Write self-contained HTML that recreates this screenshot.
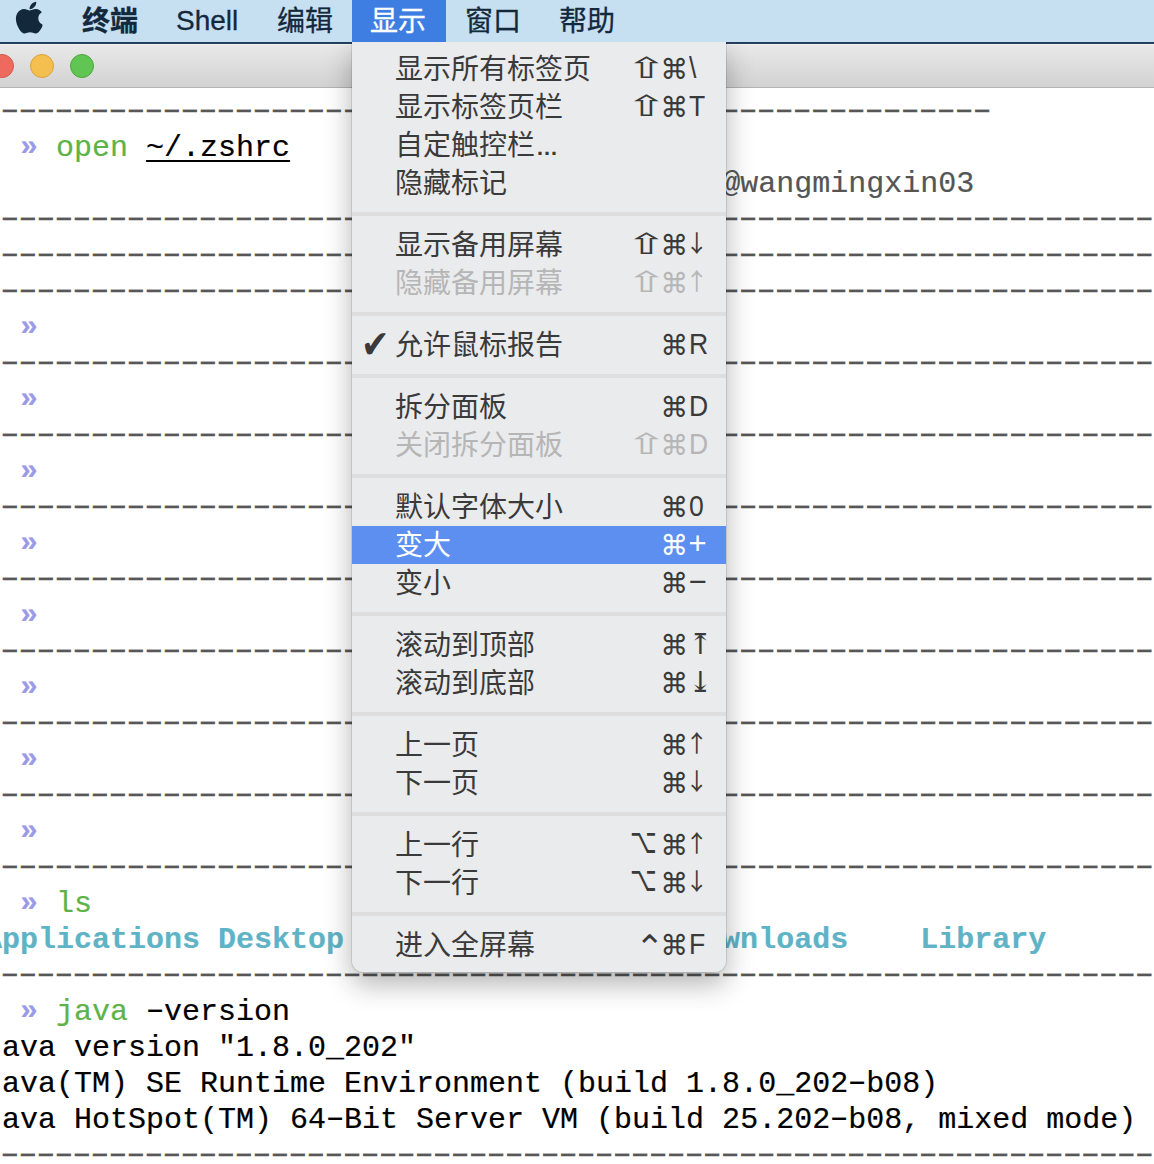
<!DOCTYPE html>
<html lang="zh-CN">
<head>
<meta charset="utf-8">
<title>终端</title>
<style>
html,body{margin:0;padding:0;}
body{width:1154px;height:1164px;overflow:hidden;position:relative;background:#fff;
 font-family:"Liberation Sans","Noto Sans CJK SC",sans-serif;}
#bar{position:absolute;left:0;top:0;width:1154px;height:42px;background:#c6e0f2;z-index:3;}
#barline{position:absolute;left:0;top:42px;width:1154px;height:2px;background:#223f5c;z-index:1;}
#bar .mi{-webkit-text-stroke:0.3px;position:absolute;top:2px;height:42px;line-height:40px;font-size:28px;color:#14283c;white-space:nowrap;}
#bar .on{color:#fff;left:370px;}
#bar .hl{position:absolute;left:352px;top:0;width:94px;height:42px;background:#3e7de2;}
#apple{position:absolute;left:12.7px;top:1.3px;}
#tb{position:absolute;left:0;top:44px;width:1154px;height:43px;background:linear-gradient(#e9e9e9,#d2d2d2);border-bottom:1px solid #b3b3b3;box-shadow:inset 0 1px 0 #f3f3f3;}
.tl{position:absolute;top:10px;width:22px;height:22px;border-radius:50%;border:1px solid;}
#term{position:absolute;left:-16px;top:94px;width:1300px;font-family:"Liberation Mono",monospace;font-size:30px;line-height:36px;color:#000;-webkit-text-stroke:0.2px;}
#term .r{height:36px;white-space:pre;}
#term .d{color:#575757;-webkit-text-stroke:0.4px #575757;display:inline-block;letter-spacing:-7.09px;transform:scaleX(1.65);transform-origin:0 50%;position:relative;left:-6.7px;top:-0.7px;}
#term .w{display:inline-block;width:18px;transform:scaleX(1.65);position:relative;top:-0.7px;}
#term .p{color:#9a9ae6;font-weight:bold;position:relative;top:-1px;}
#term .g{color:#5db347;}
#term .u{text-decoration:underline;text-decoration-thickness:2px;text-underline-offset:4px;}
#term .gr{color:#555;}
#term .c{color:#5fb3c6;font-weight:bold;}
#menu{z-index:2;position:absolute;left:352px;top:42px;width:374px;height:930px;box-sizing:border-box;padding-top:8px;background:#eaebed;border-radius:0 0 11px 11px;
 box-shadow:0 0 0 1px rgba(0,0,0,.10),0 12px 28px rgba(0,0,0,.30);font-size:28px;color:#3a3a3a;}
#menu .it{position:relative;height:38px;line-height:38px;white-space:nowrap;}
#menu .t{position:absolute;left:43px;top:1px;font-size:28px;}
#menu .el{font-size:22px;font-weight:bold;margin-left:1px;}
#menu .sep{height:24px;position:relative;}
#menu .sep i{position:absolute;left:0;right:0;top:10px;height:4px;background:#dededf;}
#menu .dis{color:#b6b6b6;}
#menu .sel{background:#5c8fef;color:#fff;}
#menu .ck{position:absolute;left:-34px;top:-2.5px;font-family:"DejaVu Sans",sans-serif;font-size:34px;transform:scaleY(1.15);}
#menu .sc{position:absolute;left:0;right:0;top:0;height:38px;}
#menu .sc span{display:inline-block;height:38px;line-height:38px;vertical-align:top;text-align:center;position:relative;}
#menu .sc .m{position:absolute;right:39px;top:0;font-family:"DejaVu Sans",sans-serif;}
#menu .cm{width:26px;font-size:28px;left:-0.5px;top:0.5px;}
#menu .sh{width:29px;font-size:29px;transform:scaleX(1.72);top:-1px;left:-0.5px;}
#menu .op{width:29px;font-size:29px;transform:scale(0.8,1.22);left:-5px;top:-4px;}
#menu .ct{width:22px;font-size:35px;left:-4px;top:3px;}
#menu .sc .k{position:absolute;left:337px;top:-1px;font-family:"Liberation Sans",sans-serif;font-size:29.5px;text-align:left;transform:scaleX(0.9);transform-origin:0 50%;}
#menu .sc .k.ud{font-family:"Noto Sans CJK SC",sans-serif;font-size:23.5px;left:333px;top:-3.5px;transform:none;}
#menu .sc .k.sym{transform:none;font-size:31px;left:336.5px;top:-1px;}
#menu .sc .k.ab{font-family:"DejaVu Serif",serif;font-size:29px;left:336px;top:-1.5px;transform:none;}
</style>
</head>
<body>
<div id="term">
<div class="r"><span class="d">--------------------------------------------------------</span></div>
<div class="r">  <span class="p">»</span> <span class="g">open</span> <span class="u">~/.zshrc</span></div>
<div class="r">                            <span class="gr">wangmingxin03@wangmingxin03</span></div>
<div class="r"><span class="d">------------------------------------------------------------------</span></div>
<div class="r"><span class="d">------------------------------------------------------------------</span></div>
<div class="r"><span class="d">------------------------------------------------------------------</span></div>
<div class="r">  <span class="p">»</span></div>
<div class="r"><span class="d">------------------------------------------------------------------</span></div>
<div class="r">  <span class="p">»</span></div>
<div class="r"><span class="d">------------------------------------------------------------------</span></div>
<div class="r">  <span class="p">»</span></div>
<div class="r"><span class="d">------------------------------------------------------------------</span></div>
<div class="r">  <span class="p">»</span></div>
<div class="r"><span class="d">------------------------------------------------------------------</span></div>
<div class="r">  <span class="p">»</span></div>
<div class="r"><span class="d">------------------------------------------------------------------</span></div>
<div class="r">  <span class="p">»</span></div>
<div class="r"><span class="d">------------------------------------------------------------------</span></div>
<div class="r">  <span class="p">»</span></div>
<div class="r"><span class="d">------------------------------------------------------------------</span></div>
<div class="r">  <span class="p">»</span></div>
<div class="r"><span class="d">------------------------------------------------------------------</span></div>
<div class="r">  <span class="p">»</span> <span class="g">ls</span></div>
<div class="r"><b class="c">Applications Desktop      Documents    Downloads    Library</b></div>
<div class="r"><span class="d">------------------------------------------------------------------</span></div>
<div class="r">  <span class="p">»</span> <span class="g">java</span> <span class="w">-</span>version</div>
<div class="r">java version "1.8.0_202"</div>
<div class="r">Java(TM) SE Runtime Environment (build 1.8.0_202<span class="w">-</span>b08)</div>
<div class="r">Java HotSpot(TM) 64<span class="w">-</span>Bit Server VM (build 25.202<span class="w">-</span>b08, mixed mode)</div>
<div class="r"><span class="d">------------------------------------------------------------------</span></div>
</div>
<div id="tb">
 <div class="tl" style="left:-10px;background:#ee6a5e;border-color:#d5584c;"></div>
 <div class="tl" style="left:30px;background:#f5bf4f;border-color:#d9a23a;"></div>
 <div class="tl" style="left:70px;background:#61c554;border-color:#4ea73f;"></div>
</div>
<div id="barline"></div>
<div id="bar">
 <svg id="apple" width="33.2" height="39" viewBox="0 0 170 200"><path fill="#14283c" d="M150.4 130.3c-2.4 5.7-5.400 10.900-8.800 15.700-4.700 6.600-8.500 11.200-11.400 13.800-4.500 4.200-9.400 6.300-14.600 6.500-3.700 0-8.200-1.100-13.500-3.200-5.300-2.100-10.100-3.200-14.600-3.200-4.700 0-9.700 1.100-15 3.200-5.400 2.100-9.700 3.300-13 3.400-5 .2-9.900-2-14.900-6.600-3.200-2.800-7.100-7.500-11.900-14.300-5.100-7.200-9.300-15.500-12.600-25-3.500-10.300-5.300-20.200-5.300-29.800 0-11 2.400-20.500 7.100-28.400 3.700-6.400 8.700-11.400 14.900-15.100 6.200-3.700 12.900-5.600 20.200-5.700 4 0 9.200 1.200 15.600 3.600 6.400 2.400 10.600 3.600 12.400 3.600 1.300 0 5.900-1.400 13.600-4.200 7.300-2.600 13.500-3.700 18.500-3.300 13.700 1.100 24 6.500 30.800 16.200-12.200 7.400-18.300 17.800-18.200 31.100.1 10.400 3.900 19 11.300 25.900 3.300 3.200 7.100 5.600 11.200 7.400-.9 2.600-1.900 5.100-2.900 7.500zM119.100 7.200c0 8.100-3 15.700-8.900 22.800-7.100 8.300-15.800 13.200-25.100 12.400-.1-1-.2-2-.2-3.100 0-7.800 3.400-16.200 9.400-23 3-3.500 6.900-6.300 11.500-8.600 4.600-2.300 9-3.500 13.100-3.700.1 1.100.2 2.200.2 3.200z"/></svg>
 <span class="mi" style="left:82px;font-weight:bold;">终端</span>
 <span class="mi" style="left:176px;top:0.5px;">Shell</span>
 <span class="mi" style="left:277px;">编辑</span>
 <div class="hl"></div><span class="mi on">显示</span>
 <span class="mi" style="left:465px;">窗口</span>
 <span class="mi" style="left:559px;">帮助</span>
</div>
<div id="menu">
<div class="it "><span class="t">显示所有标签页</span><span class="sc"><span class="m"><span class="sh">⇧</span><span class="cm">⌘</span></span><span class="k ">\</span></span></div>
<div class="it "><span class="t">显示标签页栏</span><span class="sc"><span class="m"><span class="sh">⇧</span><span class="cm">⌘</span></span><span class="k ">T</span></span></div>
<div class="it "><span class="t">自定触控栏<span class="el">…</span></span></div>
<div class="it "><span class="t">隐藏标记</span></div>
<div class="sep"><i></i></div>
<div class="it "><span class="t">显示备用屏幕</span><span class="sc"><span class="m"><span class="sh">⇧</span><span class="cm">⌘</span></span><span class="k ud">↓</span></span></div>
<div class="it dis"><span class="t">隐藏备用屏幕</span><span class="sc"><span class="m"><span class="sh">⇧</span><span class="cm">⌘</span></span><span class="k ud">↑</span></span></div>
<div class="sep"><i></i></div>
<div class="it "><span class="t"><span class="ck">✔</span>允许鼠标报告</span><span class="sc"><span class="m"><span class="cm">⌘</span></span><span class="k ">R</span></span></div>
<div class="sep"><i></i></div>
<div class="it "><span class="t">拆分面板</span><span class="sc"><span class="m"><span class="cm">⌘</span></span><span class="k ">D</span></span></div>
<div class="it dis"><span class="t">关闭拆分面板</span><span class="sc"><span class="m"><span class="sh">⇧</span><span class="cm">⌘</span></span><span class="k ">D</span></span></div>
<div class="sep"><i></i></div>
<div class="it "><span class="t">默认字体大小</span><span class="sc"><span class="m"><span class="cm">⌘</span></span><span class="k ">0</span></span></div>
<div class="it sel"><span class="t">变大</span><span class="sc"><span class="m"><span class="cm">⌘</span></span><span class="k sym">+</span></span></div>
<div class="it "><span class="t">变小</span><span class="sc"><span class="m"><span class="cm">⌘</span></span><span class="k sym">−</span></span></div>
<div class="sep"><i></i></div>
<div class="it "><span class="t">滚动到顶部</span><span class="sc"><span class="m"><span class="cm">⌘</span></span><span class="k ab">⤒</span></span></div>
<div class="it "><span class="t">滚动到底部</span><span class="sc"><span class="m"><span class="cm">⌘</span></span><span class="k ab">⤓</span></span></div>
<div class="sep"><i></i></div>
<div class="it "><span class="t">上一页</span><span class="sc"><span class="m"><span class="cm">⌘</span></span><span class="k ud">↑</span></span></div>
<div class="it "><span class="t">下一页</span><span class="sc"><span class="m"><span class="cm">⌘</span></span><span class="k ud">↓</span></span></div>
<div class="sep"><i></i></div>
<div class="it "><span class="t">上一行</span><span class="sc"><span class="m"><span class="op">⌥</span><span class="cm">⌘</span></span><span class="k ud">↑</span></span></div>
<div class="it "><span class="t">下一行</span><span class="sc"><span class="m"><span class="op">⌥</span><span class="cm">⌘</span></span><span class="k ud">↓</span></span></div>
<div class="sep"><i></i></div>
<div class="it "><span class="t">进入全屏幕</span><span class="sc"><span class="m"><span class="ct">⌃</span><span class="cm">⌘</span></span><span class="k ">F</span></span></div>

</div>
</body>
</html>
